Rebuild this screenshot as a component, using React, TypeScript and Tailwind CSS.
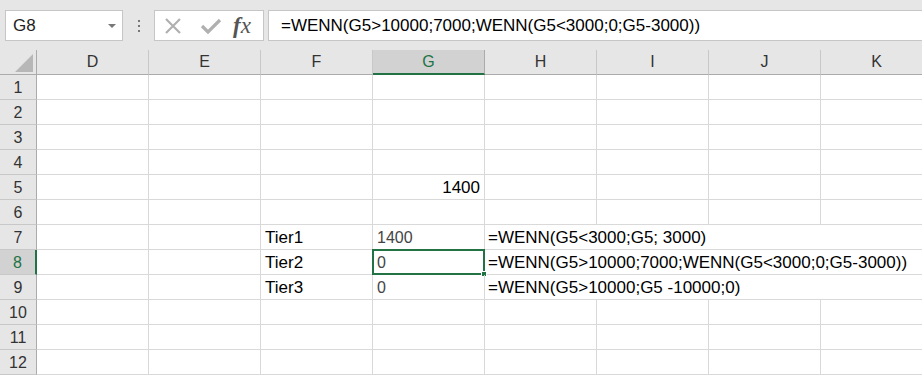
import React from "react"

const cols = ["D", "E", "F", "G", "H", "I", "J", "K"]
const rows = [1, 2, 3, 4, 5, 6, 7, 8, 9, 10, 11, 12]

const tiers: Record<number, { label: string; value: string; formula: string }> = {
     7: { label: "Tier1", value: "1400", formula: "=WENN(G5<3000;G5; 3000)" },
     8: { label: "Tier2", value: "0", formula: "=WENN(G5>10000;7000;WENN(G5<3000;0;G5-3000))" },
     9: { label: "Tier3", value: "0", formula: "=WENN(G5>10000;G5 -10000;0)" },
}

const Cell = ({ children, className = "" }: { children?: React.ReactNode; className?: string }) => (
     <div className={`h-[25px] pt-[2px] border-r border-b border-[#d9d9d9] flex items-center overflow-visible whitespace-nowrap ${className}`}>
          {children}
     </div>
)

export default function App() {
     return (
          <div className="w-[922px] h-[377px] overflow-hidden bg-white font-['Liberation_Sans',Arial,sans-serif] text-black">
               {/* formula bar */}
               <div className="h-[50px] bg-[#e6e6e6] flex items-start pt-[10px]">
                    <div className="ml-[5px] w-[118px] h-[31px] bg-white border border-[#c6c6c6] flex items-center pl-[7px] pr-[6px]">
                         <span className="text-[17px] text-[#222]">G8</span>
                         <span className="ml-auto w-0 h-0 border-l-[4px] border-r-[4px] border-t-[4px] border-l-transparent border-r-transparent border-t-[#777]"></span>
                    </div>
                    <div className="w-[31px] h-[31px] flex flex-col items-center justify-center gap-[3px]">
                         <span className="w-[2px] h-[2px] bg-[#777]"></span>
                         <span className="w-[2px] h-[2px] bg-[#777]"></span>
                         <span className="w-[2px] h-[2px] bg-[#777]"></span>
                    </div>
                    <div className="w-[110px] h-[31px] bg-white border border-[#c6c6c6] flex items-center">
                         <svg width="18" height="18" viewBox="0 0 18 18" className="ml-[9px]">
                              <path d="M2 2 L16 16 M16 2 L2 16" stroke="#b0b0b0" strokeWidth="2.2" fill="none" />
                         </svg>
                         <svg width="22" height="18" viewBox="0 0 22 18" className="ml-[18px]">
                              <path d="M2 9 L8 15 L20 3" stroke="#b0b0b0" strokeWidth="3.2" fill="none" />
                         </svg>
                         <span className="ml-[11px] font-['Liberation_Serif',serif] italic text-[23px] text-[#555] leading-none">
                              <span className="font-bold">f</span>x
                         </span>
                    </div>
                    <div className="ml-[4px] flex-1 h-[31px] bg-white border border-[#c6c6c6] border-r-0 flex items-center pl-[12px]">
                         <span className="text-[17px] whitespace-nowrap">=WENN(G5&gt;10000;7000;WENN(G5&lt;3000;0;G5-3000))</span>
                    </div>
               </div>

               {/* sheet */}
               <div className="grid grid-cols-[37px_repeat(8,112px)]">
                    <div className="h-[25px] bg-[#e6e6e6] border-r border-b border-[#ababab] flex items-end justify-end pr-[3px] pb-[2px]">
                         <svg width="18" height="18" viewBox="0 0 18 18">
                              <path d="M18 0 L18 18 L0 18 Z" fill="#b7b7b7" />
                         </svg>
                    </div>
                    {cols.map((c) => (
                         <div
                              key={c}
                              className={
                                   c === "G"
                                        ? "h-[25px] bg-[#d2d2d2] border-r border-[#ababab] border-b-2 border-b-[#217346] flex items-center justify-center text-[16px] text-[#217346]"
                                        : "h-[25px] bg-[#e6e6e6] border-r border-[#c8c8c8] border-b border-b-[#ababab] flex items-center justify-center text-[16px] text-[#333]"
                              }
                         >
                              {c}
                         </div>
                    ))}

                    {rows.map((r) => {
                         const t = tiers[r]
                         return (
                              <React.Fragment key={r}>
                                   <div
                                        className={
                                             r === 8
                                                  ? "h-[25px] pt-[2px] bg-[#d2d2d2] border-b border-[#c8c8c8] border-r-2 border-r-[#217346] flex items-center justify-center text-[16px] text-[#217346]"
                                                  : "h-[25px] pt-[2px] bg-[#e6e6e6] border-b border-[#c8c8c8] border-r border-r-[#ababab] flex items-center justify-center text-[16px] text-[#333]"
                                        }
                                   >
                                        {r}
                                   </div>
                                   <Cell />
                                   <Cell />
                                   {t ? (
                                        <>
                                             <Cell className="pl-[4px] text-[17px]">{t.label}</Cell>
                                             <Cell className="pl-[4px] text-[16px] text-[#444] relative">
                                                  {t.value}
                                                  {r === 8 && (
                                                       <div className="absolute left-[-1px] top-[-1px] w-[113px] h-[26px] border-2 border-[#217346]">
                                                            <div className="absolute right-[-4px] bottom-[-4px] w-[6px] h-[6px] bg-[#217346] border border-white"></div>
                                                       </div>
                                                  )}
                                             </Cell>
                                             <Cell className="col-span-4 pl-[3px] text-[17px]">{t.formula}</Cell>
                                        </>
                                   ) : (
                                        <>
                                             <Cell />
                                             <Cell className="justify-end pr-[4px] text-[17px]">{r === 5 ? "1400" : ""}</Cell>
                                             <Cell />
                                             <Cell />
                                             <Cell />
                                             <Cell />
                                        </>
                                   )}
                              </React.Fragment>
                         )
                    })}
               </div>
          </div>
     )
}
